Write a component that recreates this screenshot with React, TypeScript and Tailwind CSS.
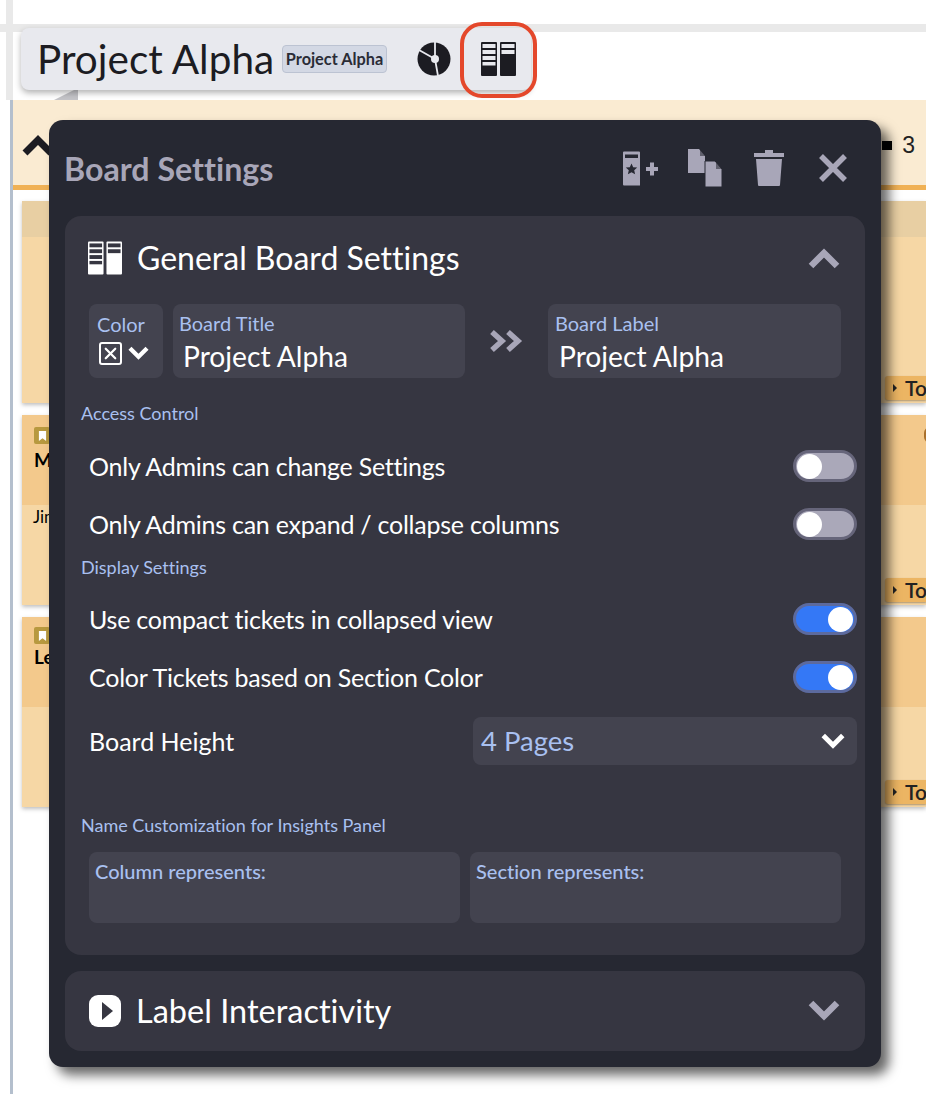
import { X } from 'lucide-react';

function BoardIcon({ fg, bg, className }: { fg: string; bg: string; className: string }) {
  return (
    <svg viewBox="0 0 35 34" className={className}>
      <rect x="0" y="0" width="16" height="34" rx="1" fill={fg} />
      <rect x="19" y="0" width="16" height="34" rx="1" fill={fg} />
      <g fill={bg}>
        <rect x="1.5" y="2" width="13" height="4" />
        <rect x="1.5" y="8" width="13" height="4" />
        <rect x="1.5" y="14" width="13" height="4" />
        <rect x="1.5" y="20" width="13" height="3.5" />
        <rect x="20.5" y="2" width="13" height="4" />
        <rect x="20.5" y="8" width="13" height="4" />
      </g>
    </svg>
  );
}

function PieIcon() {
  return (
    <svg viewBox="0 0 34 34" className="w-[34px] h-[34px]">
      <circle cx="17" cy="17" r="16.5" fill="#1c1c22" />
      <circle cx="18" cy="17" r="4" fill="#e8e9ee" />
      <path d="M18 17 L18 0 M18 17 L2 8 M18 17 L21 34" stroke="#e8e9ee" strokeWidth="1.8" />
    </svg>
  );
}

// square-ended chevrons, the lucide ones are too round for this picture
function Chevron({ dir, className }: { dir: 'up' | 'down'; className: string }) {
  return (
    <svg viewBox="0 0 32 22" className={className}>
      <path
        d={dir === 'up' ? 'M3 19 L16 6 L29 19' : 'M3 3 L16 16 L29 3'}
        fill="none"
        stroke="currentColor"
        strokeWidth="6.5"
      />
    </svg>
  );
}

function Toggle({ on }: { on?: boolean }) {
  return (
    <div
      className={`w-[64px] h-[32px] rounded-full border-[3px] flex items-center px-[1px] ${
        on ? 'bg-[#3478f6] border-[#5c6a9e] justify-end' : 'bg-[#aaa8b9] border-[#66657a] justify-start'
      }`}
    >
      <div className="w-[25px] h-[25px] rounded-full bg-white" />
    </div>
  );
}

function SettingRow({ label, on }: { label: string; on?: boolean }) {
  return (
    <div className="flex items-center justify-between h-[32px] pl-[8px]">
      <span className="text-[25px] tracking-[-0.24px] text-white leading-none">{label}</span>
      <Toggle on={on} />
    </div>
  );
}

function Card({ head, height, children }: { head: string; height: string; children?: React.ReactNode }) {
  return (
    <div className={`flex flex-col ${height} bg-[#f6d7a5] shadow-[0_2px_4px_rgba(0,0,0,0.25)] relative overflow-hidden`}>
      <div className={`${head} relative`}>{children}</div>
      <div className="mt-auto mb-[3px] ml-auto w-[41px] h-[24px] bg-[#ecb563] rounded-l-[3px] flex items-center gap-[8px] pl-[8px] shadow-[0_1px_2px_rgba(0,0,0,0.3)] overflow-hidden">
        <span className="w-0 h-0 shrink-0 border-y-[4px] border-y-transparent border-l-[4px] border-l-[#222]" />
        <span className="text-[21px] font-semibold text-[#222] leading-none -mt-[1px]">To</span>
      </div>
    </div>
  );
}

function Bookmark() {
  return (
    <div className="w-[16px] h-[17px] bg-[#b8993f] rounded-[2px] flex items-center justify-center">
      <svg viewBox="0 0 10 11" className="w-[9px] h-[10px]">
        <path d="M1 0h8v11L5 8 1 11z" fill="#fff" />
      </svg>
    </div>
  );
}

export default function App() {
  return (
    <div className="relative w-[926px] h-[1094px] overflow-hidden bg-white font-[family-name:Lato,sans-serif] [font-variant-ligatures:none]">
      {/* guide lines behind the header */}
      <div className="absolute left-0 top-[24px] w-full h-[8px] bg-[#e9e9e9]" />
      <div className="absolute left-[6px] top-0 w-[7px] h-[100px] bg-[#e9e9e9]" />
      <div className="absolute left-[50px] top-[88px]">
        <svg viewBox="0 0 30 14" className="w-[30px] h-[14px]">
          <path d="M0 14 L28 0 V14 Z" fill="#c4c4c8" />
        </svg>
      </div>

      {/* header pill */}
      <div className="pt-[28px] pl-[21px] relative">
        <div className="w-[510px] h-[62px] bg-[#e8e9ee] rounded-[8px] shadow-[0_3px_6px_rgba(0,0,0,0.3)] flex items-center pl-[16px]">
          <span className="text-[40.500px] leading-none text-[#1c1c22] w-[245px] shrink-0">Project Alpha</span>
          <span className="w-[105px] h-[28px] shrink-0 bg-[#d3d8e4] border border-[#bcc3d2] rounded-[4px] flex items-center justify-center text-[16.300px] font-bold text-[#2a2c36]">
            Project Alpha
          </span>
          <span className="ml-[30px] shrink-0 flex">
            <PieIcon />
          </span>
          <span className="ml-[30px] shrink-0 flex">
            <BoardIcon fg="#1c1c22" bg="#e8e9ee" className="w-[35px] h-[34px]" />
          </span>
        </div>
        <div className="absolute left-[460px] top-[22px] w-[77px] h-[76px] rounded-[22px] border-[4px] border-[#e4482b]" />
      </div>

      {/* board behind the modal */}
      <div className="ml-[10px] mt-[10px] border-l-[3px] border-[#b4bfcd] h-[994px] relative">
        <div className="h-[85px] bg-[#faebd2] flex items-center justify-end pr-[11px]">
          <span className="absolute left-[9px] top-[30px] w-[32px] h-[32px]">
            <svg viewBox="0 0 32 32" className="w-full h-full">
              <path d="M3 23 L16 10 L29 23" fill="none" stroke="#1c1c22" strokeWidth="7" />
            </svg>
          </span>
          <span className="w-[10px] h-[9px] bg-black mr-[10px] mt-[6px]" />
          <span className="text-[23px] mt-[6px] text-[#222] font-[family-name:'Liberation_Sans',sans-serif]">3</span>
        </div>
        <div className="h-[5px] bg-[#f0b155]" />
        <div className="pl-[9px] pt-[11px] flex flex-col gap-[12px]">
          <Card head="h-[36px] bg-[#e8cfa3]" height="h-[202px]" />
          <Card head="h-[90px] bg-[#f3c98c]" height="h-[190px]">
            <div className="pl-[12px] pt-[12px]">
              <Bookmark />
              <div className="text-[19px] font-bold text-black leading-none mt-[6px]">Mi</div>
            </div>
            <div className="absolute right-[-10px] top-[12px] w-[12px] h-[16px] rounded-full border-2 border-[#a9702c]" />
            <div className="absolute left-[11px] top-[93px] text-[17px] text-black leading-none">Jim</div>
          </Card>
          <Card head="h-[90px] bg-[#f3c98c]" height="h-[190px]">
            <div className="pl-[12px] pt-[10px]">
              <Bookmark />
              <div className="text-[19px] font-bold text-black leading-none mt-[3px]">Le</div>
            </div>
          </Card>
        </div>
      </div>

      {/* board settings modal */}
      <div className="absolute left-[49px] top-[120px] w-[832px] h-[947px] bg-[#262832] rounded-[14px] shadow-[8px_8px_12px_rgba(0,0,0,0.6)] px-[16px]">
        <div className="h-[96px] flex items-center justify-between">
          <h2 className="text-[32.200px] font-bold text-[#a8a6b8] leading-none -ml-[1px] mt-[2px]">Board Settings</h2>
          <div className="flex items-center text-[#a8a6b8] mr-[17px]">
            <svg viewBox="0 0 36 36" className="w-[36px] h-[36px]">
              <path d="M2 1.5h15a1 1 0 0 1 1 1v33H2a1 1 0 0 1-1-1v-32a1 1 0 0 1 1-1z" fill="#a8a6b8" />
              <rect x="3" y="4.500" width="13" height="3.500" fill="#262832" />
              <path d="M9.500 13.500l1.700 3.700 4 .4-3 2.700.9 4-3.600-2.100-3.600 2.100.9-4-3-2.700 4-.4z" fill="#262832" />
              <path d="M24 17h4v-4.500h4v4.500h4v4h-4v4.500h-4v-4.500h-4z" fill="#a8a6b8" />
            </svg>
            <svg viewBox="0 0 34 38" className="w-[34px] h-[38px] ml-[30px]">
              <path d="M0 0h11l6 7v17H0z" fill="#a8a6b8" />
              <path d="M17 12h10l7 8v18H17z" fill="#a8a6b8" stroke="#262832" strokeWidth="1" />
              <path d="M12 0l6 7h-6zM28 12l6 8h-6z" fill="#262832" opacity="0.55" />
            </svg>
            <svg viewBox="0 0 30 36" className="w-[30px] h-[36px] ml-[32px]">
              <path d="M11 0h8v3h11v4H0V3h11z" fill="#a8a6b8" />
              <path d="M2 9h26l-2 26a1 1 0 0 1-1 1H5a1 1 0 0 1-1-1z" fill="#a8a6b8" />
            </svg>
            <svg viewBox="0 0 30 30" className="w-[30px] h-[30px] ml-[34px]">
              <path d="M3 3 L27 27 M27 3 L3 27" fill="none" stroke="#a8a6b8" strokeWidth="5.500" />
            </svg>
          </div>
        </div>

        <section className="h-[739px] bg-[#363641] rounded-[16px] px-[24px]">
          <div className="h-[88px] flex items-center pb-[5px]">
            <BoardIcon fg="#ffffff" bg="#363641" className="w-[34px] h-[34px] shrink-0 -ml-[1px] mt-[1px]" />
            <h3 className="ml-[15px] text-[32px] text-white leading-none">General Board Settings</h3>
            <Chevron dir="up" className="ml-auto mr-[1px] w-[32px] h-[22px] text-[#a8a6b8]" />
          </div>

          <div className="flex items-center h-[74px]">
            <div className="w-[74px] h-[74px] rounded-[8px] bg-[#43434f] pl-[8px] pt-[10px]">
              <div className="text-[20px] text-[#a9c0f0] leading-none">Color</div>
              <div className="flex items-center mt-[8px] ml-[2px]">
                <div className="w-[23px] h-[23px] rounded-[3px] border-[2.500px] border-white flex items-center justify-center">
                  <X className="w-[19px] h-[19px] text-white shrink-0" strokeWidth={2.8} />
                </div>
                <Chevron dir="down" className="w-[21px] h-[15px] text-white ml-[6px]" />
              </div>
            </div>
            <div className="w-[292px] h-[74px] ml-[10px] rounded-[8px] bg-[#43434f] pl-[6px] pt-[9px]">
              <div className="text-[20px] text-[#a9c0f0] leading-none">Board Title</div>
              <div className="text-[28.200px] text-white leading-none mt-[9px] ml-[4px]">Project Alpha</div>
            </div>
            <svg viewBox="0 0 34 24" className="w-[34px] h-[24px] text-[#a8a6b8] ml-[24px] mr-[25px]">
              <path d="M3 3 L13 12 L3 21 M19 3 L29 12 L19 21" fill="none" stroke="currentColor" strokeWidth="5.500" />
            </svg>
            <div className="w-[293px] h-[74px] rounded-[8px] bg-[#43434f] pl-[7px] pt-[9px]">
              <div className="text-[20px] text-[#a9c0f0] leading-none">Board Label</div>
              <div className="text-[28.200px] text-white leading-none mt-[9px] ml-[4px]">Project Alpha</div>
            </div>
          </div>

          <div className="-ml-[8px] -mr-[16px]">
            <div className="mt-[26px] text-[18px] text-[#a9c0f0] leading-none">Access Control</div>
            <div className="mt-[28px] flex flex-col gap-[26px]">
              <SettingRow label="Only Admins can change Settings" />
              <SettingRow label="Only Admins can expand / collapse columns" />
            </div>
            <div className="mt-[18px] text-[18px] text-[#a9c0f0] leading-none">Display Settings</div>
            <div className="mt-[27px] flex flex-col gap-[26px]">
              <SettingRow label="Use compact tickets in collapsed view" on />
              <SettingRow label="Color Tickets based on Section Color" on />
            </div>
            <div className="mt-[24px] flex items-center pl-[8px]">
              <span className="text-[25px] text-white leading-none w-[384px]">Board Height</span>
              <div className="w-[384px] h-[48px] rounded-[8px] bg-[#43434f] flex items-center justify-between pl-[8px] pr-[12px]">
                <span className="text-[27.500px] text-[#a9c0f0] leading-none">4 Pages</span>
                <Chevron dir="down" className="w-[24px] h-[17px] text-white" />
              </div>
            </div>
            <div className="mt-[51px] text-[18px] text-[#a9c0f0] leading-none">Name Customization for Insights Panel</div>
          </div>

          <div className="mt-[18px] flex gap-[10px]">
            <div className="w-[371px] h-[71px] rounded-[8px] bg-[#43434f] pl-[6px] pt-[9px] text-[20px] font-medium text-[#a9c0f0] leading-none">
              Column represents:
            </div>
            <div className="w-[371px] h-[71px] rounded-[8px] bg-[#43434f] pl-[6px] pt-[9px] text-[20px] font-medium text-[#a9c0f0] leading-none">
              Section represents:
            </div>
          </div>
        </section>

        <section className="mt-[16px] h-[80px] bg-[#363641] rounded-[16px] px-[24px] flex items-center">
          <div className="w-[32px] h-[32px] rounded-[9px] bg-white flex items-center justify-center shrink-0">
            <span className="w-0 h-0 ml-[4px] border-y-[9px] border-y-transparent border-l-[11px] border-l-[#363641]" />
          </div>
          <h3 className="ml-[15px] text-[32.500px] text-white leading-none">Label Interactivity</h3>
          <Chevron dir="down" className="ml-auto mr-[1px] w-[32px] h-[22px] text-[#a8a6b8]" />
        </section>
      </div>
    </div>
  );
}
